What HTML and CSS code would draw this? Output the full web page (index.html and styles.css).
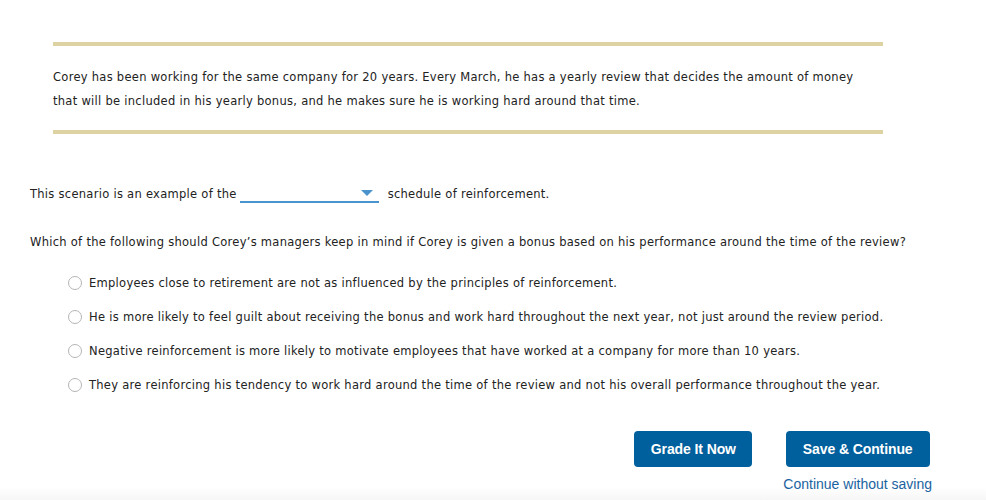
FILE: index.html
```html
<!DOCTYPE html>
<html>
<head>
<meta charset="utf-8">
<link rel="stylesheet" href="styles.css">
</head>
<body>
<div class="page">
  <div class="scenario">
    <p>Corey has been working for the same company for 20 years. Every March, he has a yearly review that decides the amount of money that will be included in his yearly bonus, and he makes sure he is working hard around that time.</p>
  </div>
  <div class="fill">
    <span>This scenario is an example of the</span>
    <span class="select"><span class="arrow"></span></span>
    <span>schedule of reinforcement.</span>
  </div>
  <p class="question">Which of the following should Corey’s managers keep in mind if Corey is given a bonus based on his performance around the time of the review?</p>
  <ul class="options">
    <li><span class="radio"></span>Employees close to retirement are not as influenced by the principles of reinforcement.</li>
    <li><span class="radio"></span>He is more likely to feel guilt about receiving the bonus and work hard throughout the next year, not just around the review period.</li>
    <li><span class="radio"></span>Negative reinforcement is more likely to motivate employees that have worked at a company for more than 10 years.</li>
    <li><span class="radio"></span>They are reinforcing his tendency to work hard around the time of the review and not his overall performance throughout the year.</li>
  </ul>
  <div class="actions">
    <button class="btn grade">Grade It Now</button>
    <div class="save">
      <button class="btn">Save &amp; Continue</button>
      <a class="link" href="#">Continue without saving</a>
    </div>
  </div>
</div>
</body>
</html>
```
FILE: styles.css
```css
html {
  margin: 0;
  padding: 0;
  background: #fff;
}
body {
  margin: 0;
  padding: 0;
  font-family: "DejaVu Sans", Verdana, sans-serif;
  font-size: 11.5px;
  letter-spacing: 0.28px;
  color: #222;
  height: 500px;
  overflow: hidden;
  background: linear-gradient(to bottom, #fff 487px, #f6f6f6 500px);
}
.page {
  padding: 42px 0 0 30px;
  width: 904px;
}
.scenario {
  margin-left: 23px;
  width: 830px;
  border-top: 4px solid #ddd3a2;
  border-bottom: 4px solid #ddd3a2;
}
.scenario p {
  margin: 0;
  padding: 19px 14px 17px 0;
  line-height: 24px;
}
.fill {
  display: flex;
  align-items: center;
  margin-top: 51px;
  height: 18px;
}
.select {
  width: 139px;
  height: 16px;
  border-bottom: 2px solid #4a93cc;
  margin: 0 9px 0 3px;
  position: relative;
}
.arrow {
  position: absolute;
  right: 6px;
  top: 5px;
  width: 0;
  height: 0;
  border-left: 6px solid transparent;
  border-right: 6px solid transparent;
  border-top: 6px solid #4a93cc;
}
.question {
  margin: 31px 0 0;
  line-height: 16px;
}
.options {
  list-style: none;
  margin: 16px 0 0 38px;
  padding: 0;
}
.options li {
  display: flex;
  align-items: center;
  height: 34px;
}
.radio {
  width: 12px;
  height: 12px;
  border: 1px solid #b5b5b5;
  border-radius: 50%;
  margin-right: 7px;
  background: #fff;
}
.actions {
  display: flex;
  justify-content: flex-end;
  gap: 31px;
  margin-top: 29px;
  width: 902px;
}
.btn {
  font-family: "Liberation Sans", Arial, sans-serif;
  font-weight: bold;
  font-size: 14px;
  letter-spacing: -0.1px;
  white-space: nowrap;
  color: #fff;
  background: #005f9d;
  border: none;
  border-radius: 4px;
  height: 36px;
  padding: 0;
  width: 144px;
}
.grade {
  width: 118px;
}
.save {
  display: flex;
  flex-direction: column;
  align-items: center;
}
.link {
  font-family: "Liberation Sans", Arial, sans-serif;
  font-size: 14px;
  letter-spacing: 0;
  color: #1b63a0;
  text-decoration: none;
  margin-top: 9px;
  line-height: 16px;
}
```
